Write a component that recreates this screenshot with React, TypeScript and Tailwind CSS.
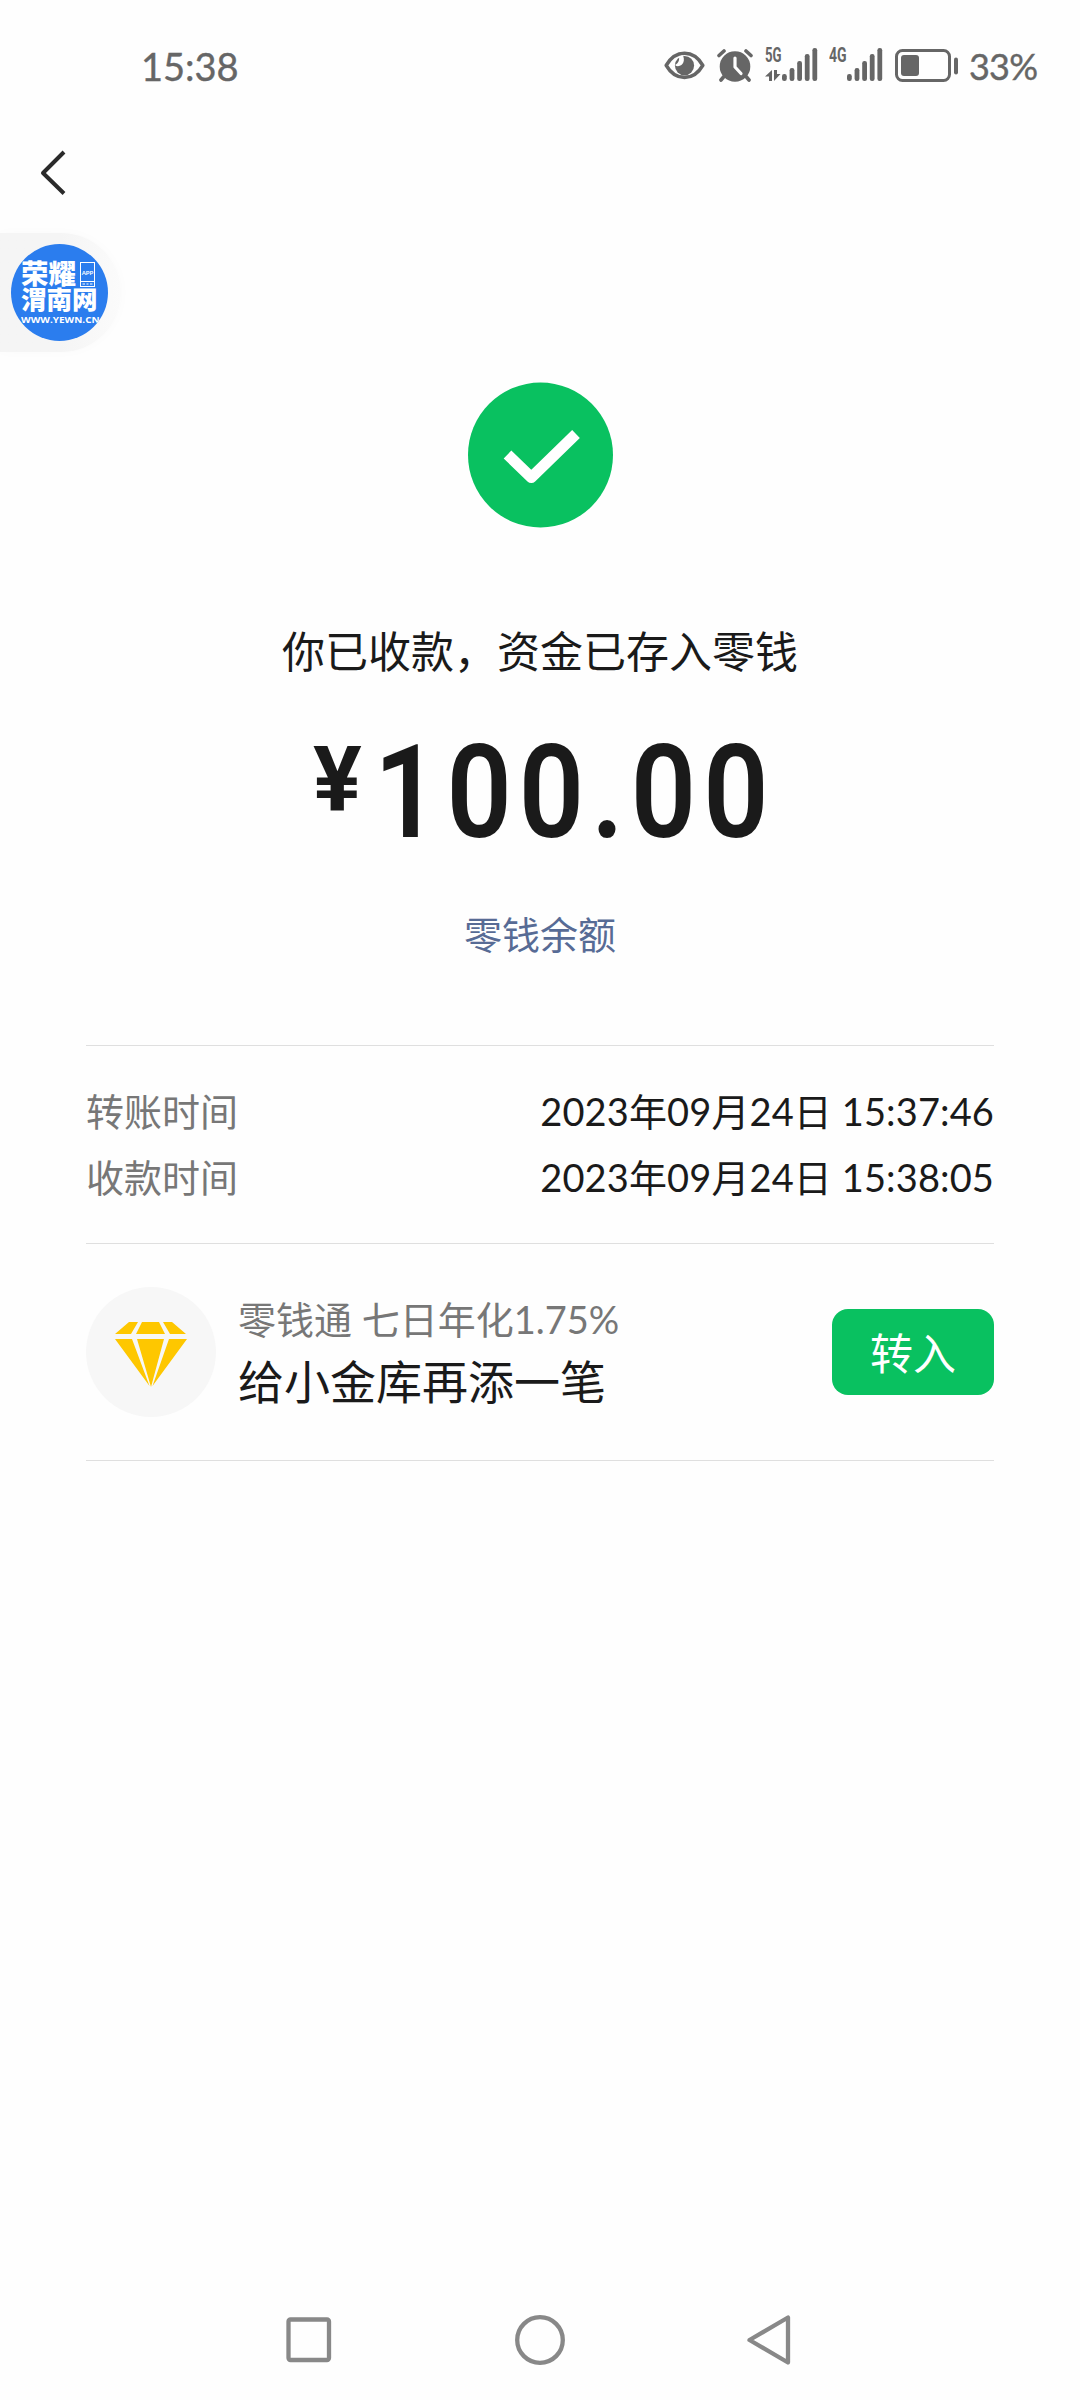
import React from "react";

const bars = [
  { x: 0, y: 26 },
  { x: 7.6, y: 20 },
  { x: 15.2, y: 13 },
  { x: 22.8, y: 6 },
  { x: 30.4, y: 0 },
];

function Signal() {
  return (
    <svg className="h-[33px] w-9 shrink-0" viewBox="0 0 36 33" fill="#666">
      {bars.map((b) => (
        <rect key={b.x} x={b.x} y={b.y} width="4.8" height={33 - b.y} rx="2.2" />
      ))}
    </svg>
  );
}

function StatusBar() {
  return (
    <header className="flex h-[132px] items-start pt-12 text-[#666]">
      <div className="ml-[141px] mt-[-1px] h-[38px] text-[38px] leading-[38px] [-webkit-text-stroke:0.4px_#666]">15:38</div>
      <div className="ml-auto mr-[43px] flex h-[34px] items-start">
        <svg className="mt-[3px] h-[29px] w-[41px]" viewBox="0 0 41 29" fill="none">
          <path d="M2.2 14.300C6.500 6.800 13 2.200 20.500 2.200s14 4.600 18.300 12.100C34.500 21.800 28 26.400 20.500 26.400S6.500 21.800 2.200 14.300Z" stroke="#666" strokeWidth="3.600" strokeLinejoin="round" />
          <circle cx="20.500" cy="14.600" r="9.600" fill="#666" />
          <path d="M18.500 4C21.500 8.500 19.500 15 14 15.200C12.800 15.200 11.800 14.800 11 14C14.500 12 15.500 9.500 15 5.500Z" fill="#fefefe" />
        </svg>
        <svg className="ml-3 mt-[1px] h-[33px] w-[36px]" viewBox="0 0 36 33" fill="none" stroke="#666">
          <circle cx="18" cy="17.500" r="15.300" fill="#666" stroke="none" />
          <path d="M2 6.500 7 2M34 6.500 29 2M6.500 28 4 31M29.500 28 32 31" strokeWidth="3.600" strokeLinecap="round" />
          <path d="M18 9v9l6 6.500" stroke="#fefefe" strokeWidth="3.200" strokeLinecap="round" strokeLinejoin="round" />
        </svg>
        <div className="ml-3 flex h-[33px] w-[17px] flex-col justify-between">
          <span className="h-[15px] origin-left scale-x-[0.66] font-['Roboto'] text-[20px] leading-[15px] font-bold">5G</span>
          <svg className="h-[11px] w-4" viewBox="0 0 16 11" fill="#666">
            <path d="M7 0V11H4V6.500H0ZM9 0H12V4H15.500L9 11Z" />
          </svg>
        </div>
        <Signal />
        <div className="ml-[11px] h-[33px] w-[18px]">
          <span className="block h-[15px] origin-left scale-x-[0.7] font-['Roboto'] text-[20px] leading-[15px] font-bold">4G</span>
        </div>
        <Signal />
        <svg className="ml-3 mt-[1px] h-[33px] w-[63px]" viewBox="0 0 63 33" fill="none">
          <rect x="1.500" y="1.500" width="53" height="30" rx="6" stroke="#666" strokeWidth="3" />
          <rect x="6" y="6" width="18" height="21" rx="3" fill="#666" />
          <rect x="59" y="8.500" width="4" height="17" rx="2" fill="#666" />
        </svg>
        <div className="ml-[11px] mt-[-1px] h-[38px] w-[68px] text-[36px] leading-[38px] tracking-[-0.8px] [-webkit-text-stroke:0.4px_#666]">33%</div>
      </div>
    </header>
  );
}

function FloatingBadge() {
  return (
    <div className="flex h-[119px] w-[121px] items-center rounded-r-full bg-linear-to-r from-[#f5f5f5] from-50% to-[#fbfbfb] pl-[11px] shadow-[0_0_12px_rgba(0,0,0,0.02)]">
      <div className="flex h-[97px] w-[97px] flex-col overflow-hidden rounded-full bg-[#2b7dee] pt-[15px] pl-[10px] text-white">
        <div className="flex h-[26px] items-center gap-[3px]">
          <span className="w-[56px] font-['Noto_Sans_CJK_SC'] text-[27.500px] leading-[26px] font-black whitespace-nowrap">荣耀</span>
          <span className="mt-[4px] flex h-[25px] w-[15px] flex-col items-center justify-between border border-white pt-[7px] text-[6px] leading-[6px] font-bold">
            APP
            <svg className="h-[5px] w-full" viewBox="0 0 13 5" fill="none" stroke="#fff">
              <path d="M0 .5H13M1.500 3H4M5.500 3H7.500M9 3H11.500" />
            </svg>
          </span>
        </div>
        <span className="h-[26px] font-['Noto_Sans_CJK_SC'] text-[25.500px] leading-[26px] font-black whitespace-nowrap">渭南网</span>
        <span className="mt-[4px] h-[10px] w-[90px] origin-left scale-x-[1.05] font-['Open_Sans'] text-[9.500px] leading-[10px] font-bold whitespace-nowrap">WWW.YEWN.CN</span>
      </div>
    </div>
  );
}

function TimeRow({ label, value }: { label: string; value: string }) {
  return (
    <div className="flex h-[66px] items-center justify-between text-[38px] leading-[66px]">
      <span className="text-[#777]">{label}</span>
      <span className="tracking-[0.12px] text-[#1a1a1a]">{value}</span>
    </div>
  );
}

export default function App() {
  return (
    <div className="flex h-[2400px] w-[1080px] flex-col overflow-hidden bg-[#fefefe] font-['Lato','Noto_Sans_CJK_SC',sans-serif] text-[#1a1a1a]">
      <StatusBar />
      <nav className="h-[101px] pt-[18px] pl-[40px]">
        <svg className="h-[46px] w-[28px]" viewBox="0 0 28 46" fill="none" stroke="#2a2a2a" strokeWidth="4">
          <path d="M24 2 3 23 24 43.500" strokeLinejoin="round" />
        </svg>
      </nav>
      <FloatingBadge />

      <main className="flex flex-1 flex-col items-center pt-[30px]">
        <svg className="h-[146px] w-[146px]" viewBox="0 0 146 146" fill="none">
          <circle cx="73.500" cy="73" r="72.500" fill="#09c160" />
          <path d="M40.500 72.500 64.300 95.500 109 52" stroke="#fff" strokeWidth="11" strokeLinejoin="round" />
        </svg>
        <h1 className="mt-[94px] h-[60px] text-[43px] leading-[60px] whitespace-nowrap">你已收款，资金已存入零钱</h1>
        <div className="mt-[44px] flex h-[130px] w-[460px] items-start font-['Roboto']">
          <span className="mt-[9px] ml-[3px] w-[61px] shrink-0 text-[91px] leading-[91px] font-bold">¥</span>
          <span className="mt-[2px] origin-left scale-x-[0.88] text-[130px] leading-[130px] font-semibold tracking-[8px]">100.00</span>
        </div>
        <a className="mt-[48px] h-[60px] text-[38px] leading-[60px] text-[#576b95]">零钱余额</a>

        <section className="mt-[81px] w-[908px] border-t border-[#dfdfdf] pt-[32px]">
          <TimeRow label="转账时间" value="2023年09月24日 15:37:46" />
          <TimeRow label="收款时间" value="2023年09月24日 15:38:05" />
        </section>
        <section className="mt-[33px] flex h-[218px] w-[908px] items-start border-y border-[#dfdfdf] pt-[43px]">
          <div className="flex h-[130px] w-[130px] items-center justify-center rounded-full bg-[#f7f7f7]">
            <svg className="mt-1 h-[66px] w-[74px]" viewBox="0 0 74 66" fill="#fec700">
              <path d="M15 1H24L17 13H1ZM28 1H45L51 13H22ZM49 1H58L72 13H56Z" />
              <path d="M1 18H18L35.500 65ZM23 18H50L37 66ZM55 18H73L38.500 65Z" />
            </svg>
          </div>
          <div className="mt-[-1px] ml-[22px]">
            <p className="h-[66px] text-[38px] leading-[66px] text-[#777]">零钱通 七日年化1.75%</p>
            <p className="h-[60px] text-[46px] leading-[60px]">给小金库再添一笔</p>
          </div>
          <button className="mt-[22px] ml-auto h-[86px] w-[162px] rounded-[16px] bg-[#09c160] pt-[3px] text-[43px] leading-[83px] text-white">转入</button>
        </section>
      </main>

      <footer className="flex h-[100px] items-start pt-[15px] pl-[286px]">
        <svg className="mt-[2px] h-[46px] w-[46px]" viewBox="0 0 46 46" fill="none" stroke="#888" strokeWidth="4.300">
          <rect x="2.500" y="2.500" width="40.500" height="40.500" rx="2" />
        </svg>
        <svg className="ml-[183px] h-[50px] w-[50px]" viewBox="0 0 50 50" fill="none" stroke="#888" strokeWidth="4.300">
          <circle cx="25" cy="25" r="22.800" />
        </svg>
        <svg className="ml-[181px] h-[50px] w-[46px]" viewBox="0 0 46 50" fill="none" stroke="#888" strokeWidth="4.300" strokeLinejoin="round">
          <path d="M42 2.500V47.500L3.500 25Z" />
        </svg>
      </footer>
    </div>
  );
}
